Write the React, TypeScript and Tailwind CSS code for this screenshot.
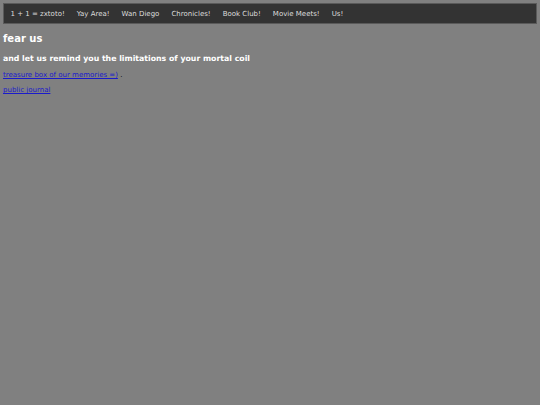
const navItems = [
  "1 + 1 = zxtoto!",
  "Yay Area!",
  "Wan Diego",
  "Chronicles!",
  "Book Club!",
  "Movie Meets!",
  "Us!",
];

export default function App() {
  return (
    <div className="min-h-[405px] w-full bg-[#808080] p-[3px] font-['DejaVu_Sans',sans-serif]">
      <nav className="h-[21px] border border-[#5a5a5a] bg-[#333333]">
        <ul className="flex h-full items-center pl-[0.5px] pt-[1px]">
          {navItems.map((item) => (
            <li key={item}>
              <a href="#" className="block px-[6px] text-[7px] text-[#dddddd]">
                {item}
              </a>
            </li>
          ))}
        </ul>
      </nav>
      <h1 className="mt-[8px] text-[10px] leading-[14px] font-bold text-white">fear us</h1>
      <h2 className="mt-[7px] text-[7.8px] leading-[12px] font-bold text-white">
        and let us remind you the limitations of your mortal coil
      </h2>
      <p className="mt-[5px] text-[7px] leading-[10px] text-black">
        <a href="#" className="text-[#1a1acc] underline">
          treasure box of our memories =)
        </a>{" "}
        .
      </p>
      <p className="mt-[5px] text-[7px] leading-[10px]">
        <a href="#" className="text-[#1a1acc] underline">
          public journal
        </a>
      </p>
    </div>
  );
}
